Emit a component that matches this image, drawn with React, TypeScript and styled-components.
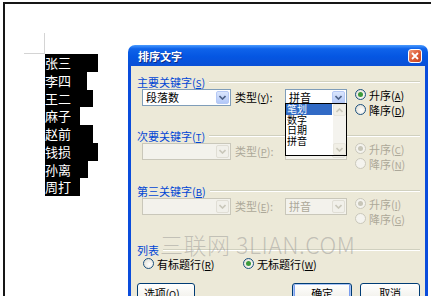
import styled, { createGlobalStyle } from 'styled-components';

const GlobalStyle = createGlobalStyle`
  body {
    margin: 0;
    background: #fff;
    font-family: "Noto Sans CJK SC", "Noto Sans", sans-serif;
  }
`;

// PAGE

const Screen = styled.div`
  position: relative;
  width: 431px;
  height: 296px;
  overflow: hidden;
  background: #fff;
`;

const Page = styled.div`
  margin: 2px 0 0 3px;
  height: 320px;
  border-top: 2px solid #161616;
  border-left: 2px solid #161616;
  padding: 29px 0 0 19px;
`;

const CropMark = styled.div`
  width: 20px;
  height: 20px;
  border-right: 1px solid #d4d4d4;
  border-bottom: 1px solid #d4d4d4;
`;

const Lines = styled.div`
  margin-left: 21px;
`;

const Line = styled.div<{ $w: number }>`
  width: ${p => p.$w}px;
  height: 17.75px;
  background: #000;
  color: #fff;
  font-size: 13px;
  line-height: 17.75px;
  white-space: nowrap;
`;

const Watermark = styled.div`
  position: absolute;
  left: 160px;
  top: 229px;
  font-size: 23px;
  line-height: 30px;
  font-weight: 300;
  color: rgba(140, 140, 140, 0.45);
  letter-spacing: 0.5px;
  white-space: nowrap;
`;

// DIALOG

const Dialog = styled.div`
  position: absolute;
  left: 128px;
  top: 45px;
  width: 300px;
  height: 270px;
  border-radius: 7px 7px 0 0;
  overflow: hidden;
  display: flex;
  flex-direction: column;
`;

const TitleBar = styled.div`
  height: 21px;
  flex-shrink: 0;
  display: flex;
  align-items: center;
  justify-content: space-between;
  padding: 0 6px 0 10px;
  background: linear-gradient(#4a9bff 0%, #0f63ea 18%, #0556e2 55%, #0a50d6 100%);
`;

const Title = styled.span`
  color: #fff;
  font-size: 11px;
  font-weight: bold;
  text-shadow: 1px 1px 0 #0b2a86;
`;

const CloseBtn = styled.div`
  width: 14px;
  height: 14px;
  box-sizing: border-box;
  border: 1px solid #fff;
  border-radius: 3px;
  background: linear-gradient(135deg, #ee9a7a 0%, #e0623d 45%, #c4411e 100%);
  display: flex;
  align-items: center;
  justify-content: center;
`;

const Body = styled.div`
  position: relative;
  flex: 1;
  background: #ece9d8;
  border-left: 3px solid #0a4cdc;
  border-right: 3px solid #0a4cdc;
  padding: 10px 5px 0 6px;
  font-size: 11px;
  color: #000;
`;

const Section = styled.div<{ $h: number }>`
  height: ${p => p.$h}px;
`;

const GroupHead = styled.div`
  display: flex;
  align-items: center;
  height: 12px;
  gap: 4px;
`;

const GroupLabel = styled.span`
  color: #0046d5;
  font-size: 11px;
  line-height: 12px;
  white-space: nowrap;
`;

const GroupLine = styled.div`
  flex: 1;
  border-top: 1px solid #d0d0bf;
  border-bottom: 1px solid #fff;
`;

const Key = styled.span`
  font-size: 9.5px;
  text-decoration: underline;
`;

const KeyRow = styled.div`
  display: flex;
  align-items: flex-start;
  margin: 1px 0 0 5px;
`;

const Combo = styled.div<{ $w: number; $disabled?: boolean }>`
  width: ${p => p.$w}px;
  height: 17px;
  box-sizing: border-box;
  border: 1px solid ${p => (p.$disabled ? '#c9c7ba' : '#7f9db9')};
  background: ${p => (p.$disabled ? '#f3f2ec' : '#fff')};
  display: flex;
  align-items: center;
  justify-content: space-between;
  padding: 0 1px 0 3px;
  color: ${p => (p.$disabled ? '#aca899' : '#000')};
  font-size: 11px;
  line-height: 15px;
`;

const ArrowBtn = styled.div<{ $disabled?: boolean }>`
  width: 13px;
  height: 13px;
  box-sizing: border-box;
  border-radius: 2px;
  border: 1px solid ${p => (p.$disabled ? '#e0ded5' : '#b6c9f5')};
  background: ${p => (p.$disabled ? '#f1f0ea' : 'linear-gradient(#dbe6fd, #b2c8f8)')};
  display: flex;
  align-items: center;
  justify-content: center;
`;

const TypeLabel = styled.span<{ $disabled?: boolean }>`
  width: 50px;
  margin-left: 4px;
  line-height: 17px;
  font-size: 11px;
  white-space: nowrap;
  color: ${p => (p.$disabled ? '#aca899' : '#000')};
`;

const RadioCol = styled.div`
  margin: -2px 0 0 8px;
  display: flex;
  flex-direction: column;
`;

const RadioItem = styled.div<{ $disabled?: boolean }>`
  height: 15px;
  display: flex;
  align-items: center;
  gap: 3px;
  font-size: 11px;
  white-space: nowrap;
  color: ${p => (p.$disabled ? '#aca899' : '#000')};
`;

const RadioDot = styled.span<{ $on?: boolean; $disabled?: boolean }>`
  width: 11px;
  height: 11px;
  box-sizing: border-box;
  border-radius: 50%;
  border: 1px solid ${p => (p.$disabled ? '#cac8bb' : '#1c5180')};
  background: ${p => (p.$disabled ? '#f4f3ee' : 'radial-gradient(circle at 60% 60%, #fff, #dcd9cc)')};
  display: flex;
  align-items: center;
  justify-content: center;

  &::after {
    content: '';
    display: ${p => (p.$on ? 'block' : 'none')};
    width: 5px;
    height: 5px;
    border-radius: 50%;
    background: ${p => (p.$disabled ? '#c8c6b8' : '#3c9a3c')};
  }
`;

const DropList = styled.div`
  position: absolute;
  left: 154px;
  top: 37px;
  width: 62px;
  height: 53px;
  box-sizing: border-box;
  border: 1px solid #000;
  background: #fff;
  display: flex;
`;

const ListItems = styled.div`
  flex: 1;
`;

const ListItem = styled.div<{ $sel?: boolean }>`
  height: 10.5px;
  line-height: 10.5px;
  font-size: 10px;
  padding-left: 1px;
  margin-right: 1px;
  background: ${p => (p.$sel ? '#316ac5' : 'transparent')};
  color: ${p => (p.$sel ? '#fff' : '#000')};
  white-space: nowrap;
`;

const ScrollBar = styled.div`
  width: 13px;
  background: #f4f3ee;
  display: flex;
  flex-direction: column;
  justify-content: space-between;
`;

const ScrollBtn = styled.div`
  height: 12px;
  box-sizing: border-box;
  border: 1px solid #e8e6dd;
  border-radius: 2px;
  background: #f1efe6;
  display: flex;
  align-items: center;
  justify-content: center;
`;

const ListOptions = styled.div`
  display: grid;
  grid-template-columns: 100px auto;
  margin-left: 6px;
  height: 14px;
  align-items: center;
`;

const ButtonRow = styled.div`
  display: flex;
  justify-content: space-between;
  margin-top: 13px;
`;

const ButtonGroup = styled.div`
  display: flex;
  gap: 8px;
`;

const Button = styled.div<{ $w: number; $default?: boolean }>`
  width: ${p => p.$w}px;
  height: 22px;
  box-sizing: border-box;
  border: 1px solid #003c74;
  border-radius: 3px;
  background: linear-gradient(#ffffff 0%, #f4f3ee 60%, #dcd8cb 100%);
  box-shadow: ${p => (p.$default ? 'inset 0 0 0 1px #a9c4f5, inset 0 -1px 0 2px #7a9ef0' : 'none')};
  font-size: 11px;
  line-height: 14px;
  padding-top: 2px;
  text-align: center;
  white-space: nowrap;
  letter-spacing: -0.2px;
`;

const Chevron = ({ color, up }: { color: string; up?: boolean }) => (
  <svg width="7" height="5" viewBox="0 0 7 5">
    <polyline
      points={up ? '0.5,4 3.5,1 6.5,4' : '0.5,1 3.5,4 6.5,1'}
      fill="none"
      stroke={color}
      strokeWidth="1.6"
    />
  </svg>
);

// black highlight reaches a different width on every line
const names: [string, number][] = [
  ['张三', 53],
  ['李四', 42],
  ['王二', 48],
  ['麻子', 35],
  ['赵前', 48],
  ['钱损', 53],
  ['孙离', 43],
  ['周打', 35],
];

const KeyGroup = ({
  title,
  typeLabel,
  value,
  typeValue,
  disabled,
  up,
  down,
}: {
  title: React.ReactNode;
  typeLabel: React.ReactNode;
  value: string;
  typeValue: string;
  disabled?: boolean;
  up: React.ReactNode;
  down: React.ReactNode;
}) => (
  <>
    <GroupHead>
      <GroupLabel>{title}</GroupLabel>
      <GroupLine />
    </GroupHead>
    <KeyRow>
      <Combo $w={89} $disabled={disabled}>
        <span>{value}</span>
        <ArrowBtn $disabled={disabled}>
          <Chevron color={disabled ? '#c9c7ba' : '#4d6185'} />
        </ArrowBtn>
      </Combo>
      <TypeLabel $disabled={disabled}>{typeLabel}</TypeLabel>
      <Combo $w={62} $disabled={disabled}>
        <span>{typeValue}</span>
        <ArrowBtn $disabled={disabled}>
          <Chevron color={disabled ? '#c9c7ba' : '#4d6185'} />
        </ArrowBtn>
      </Combo>
      <RadioCol>
        <RadioItem $disabled={disabled}>
          <RadioDot $on $disabled={disabled} />
          <span>{up}</span>
        </RadioItem>
        <RadioItem $disabled={disabled}>
          <RadioDot $disabled={disabled} />
          <span>{down}</span>
        </RadioItem>
      </RadioCol>
    </KeyRow>
  </>
);

const App = () => (
  <Screen>
    <GlobalStyle />
    <Page>
      <CropMark />
      <Lines>
        {names.map(([n, w]) => (
          <Line key={n} $w={w}>{n}</Line>
        ))}
      </Lines>
    </Page>

    <Dialog>
      <TitleBar>
        <Title>排序文字</Title>
        <CloseBtn>
          <svg width="8" height="8" viewBox="0 0 8 8">
            <path d="M1 1 L7 7 M7 1 L1 7" stroke="#fff" strokeWidth="1.8" />
          </svg>
        </CloseBtn>
      </TitleBar>
      <Body>
        <Section $h={54}>
          <KeyGroup
            title={<>主要关键字(<Key>S</Key>)</>}
            typeLabel={<>类型(<Key>Y</Key>):</>}
            value="段落数"
            typeValue="拼音"
            up={<>升序(<Key>A</Key>)</>}
            down={<>降序(<Key>D</Key>)</>}
          />
        </Section>
        <Section $h={55}>
          <KeyGroup
            title={<>次要关键字(<Key>T</Key>)</>}
            typeLabel={<>类型(<Key>P</Key>):</>}
            value=""
            typeValue=""
            disabled
            up={<>升序(<Key>C</Key>)</>}
            down={<>降序(<Key>N</Key>)</>}
          />
        </Section>
        <Section $h={59}>
          <KeyGroup
            title={<>第三关键字(<Key>B</Key>)</>}
            typeLabel={<>类型(<Key>E</Key>):</>}
            value=""
            typeValue="拼音"
            disabled
            up={<>升序(<Key>I</Key>)</>}
            down={<>降序(<Key>G</Key>)</>}
          />
        </Section>

        <GroupHead>
          <GroupLabel>列表</GroupLabel>
          <GroupLine />
        </GroupHead>
        <ListOptions>
          <RadioItem>
            <RadioDot />
            <span>有标题行(<Key>R</Key>)</span>
          </RadioItem>
          <RadioItem>
            <RadioDot $on />
            <span>无标题行(<Key>W</Key>)</span>
          </RadioItem>
        </ListOptions>

        <ButtonRow>
          <Button $w={58}>选项(<Key>O</Key>)...</Button>
          <ButtonGroup>
            <Button $w={60} $default>确定</Button>
            <Button $w={60}>取消</Button>
          </ButtonGroup>
        </ButtonRow>

        <DropList>
          <ListItems>
            <ListItem $sel>笔划</ListItem>
            <ListItem>数字</ListItem>
            <ListItem>日期</ListItem>
            <ListItem>拼音</ListItem>
          </ListItems>
          <ScrollBar>
            <ScrollBtn>
              <Chevron color="#c9c7ba" up />
            </ScrollBtn>
            <ScrollBtn>
              <Chevron color="#c9c7ba" />
            </ScrollBtn>
          </ScrollBar>
        </DropList>
      </Body>
    </Dialog>

    <Watermark>三联网 3LIAN.COM</Watermark>
  </Screen>
);

export default App;
